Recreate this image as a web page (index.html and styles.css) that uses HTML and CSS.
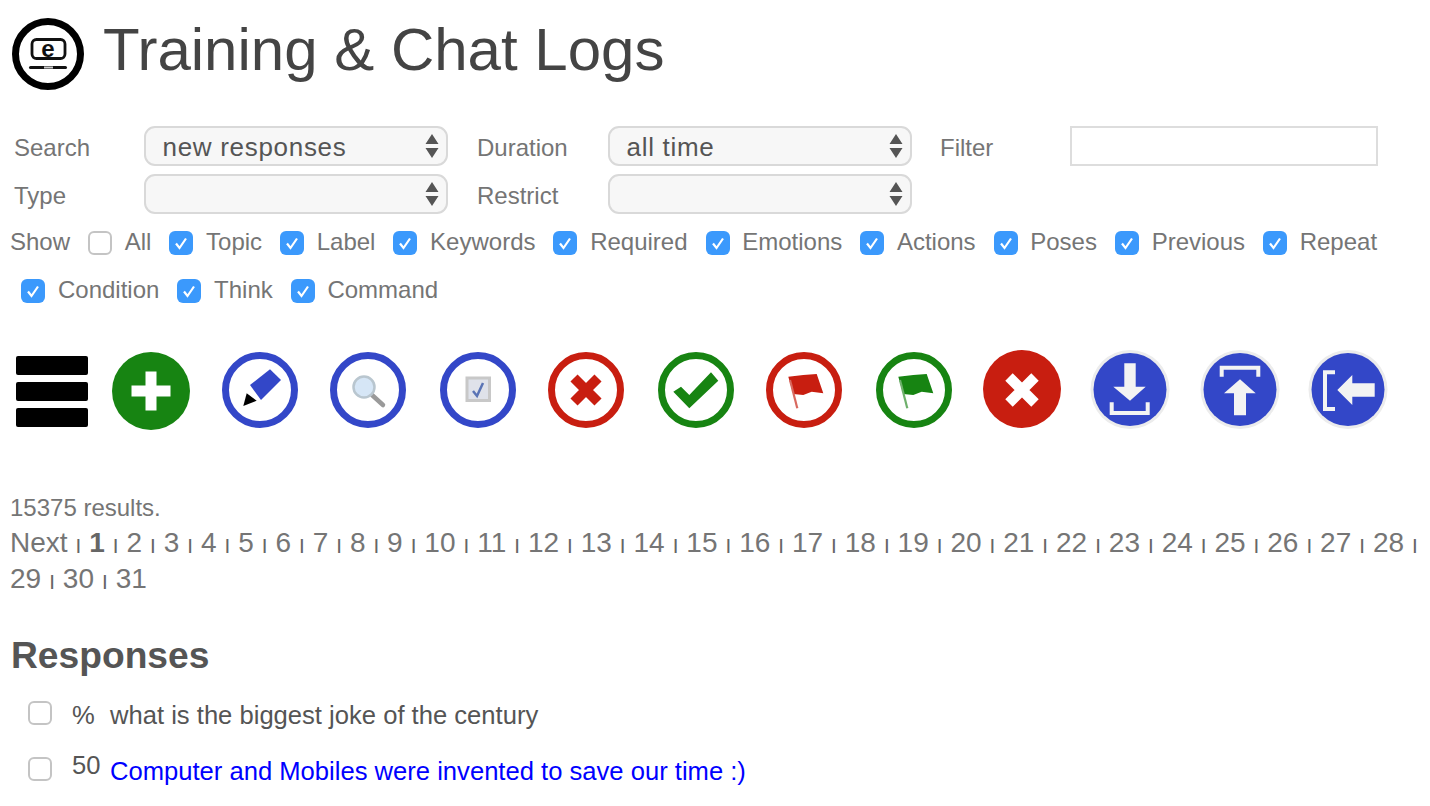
FILE: index.html
```html
<!DOCTYPE html>
<html lang="en">
<head>
<meta charset="utf-8">
<title>Training &amp; Chat Logs</title>
<link rel="stylesheet" href="styles.css">
</head>
<body>
<header class="page-head">
  <svg class="logo" viewBox="0 0 72 72" aria-hidden="true">
    <circle cx="36" cy="36" r="32.500" fill="#fff" stroke="#000" stroke-width="7"/>
    <rect x="20" y="21.500" width="33" height="19" rx="4.500" fill="none" stroke="#111" stroke-width="2.800"/>
    <text x="36" y="38.500" text-anchor="middle" class="logo-e">e</text>
    <rect x="17" y="48" width="38" height="3" rx="1.500" fill="#111"/>
    <rect x="32" y="48.500" width="9" height="2" fill="#ccc"/>
  </svg>
  <h1 class="title">Training &amp; Chat Logs</h1>
</header>

<form class="filters">
  <label class="f-label">Search</label>
  <select class="f-select"><option>new responses</option></select>
  <label class="f-label f-label-mid">Duration</label>
  <select class="f-select"><option>all time</option></select>
  <label class="f-label f-label-end">Filter</label>
  <input class="f-input" type="text">
  <label class="f-label">Type</label>
  <select class="f-select"><option></option></select>
  <label class="f-label f-label-mid">Restrict</label>
  <select class="f-select"><option></option></select>
</form>

<div class="show">
  <span>Show</span>
  <label class="opt"><input type="checkbox" class="box">All</label>
  <label class="opt"><input type="checkbox" class="box" checked>Topic</label>
  <label class="opt"><input type="checkbox" class="box" checked>Label</label>
  <label class="opt"><input type="checkbox" class="box" checked>Keywords</label>
  <label class="opt"><input type="checkbox" class="box" checked>Required</label>
  <label class="opt"><input type="checkbox" class="box" checked>Emotions</label>
  <label class="opt"><input type="checkbox" class="box" checked>Actions</label>
  <label class="opt"><input type="checkbox" class="box" checked>Poses</label>
  <label class="opt"><input type="checkbox" class="box" checked>Previous</label>
  <label class="opt"><input type="checkbox" class="box" checked>Repeat</label>
  <label class="opt"><input type="checkbox" class="box" checked>Condition</label>
  <label class="opt"><input type="checkbox" class="box" checked>Think</label>
  <label class="opt"><input type="checkbox" class="box" checked>Command</label>
</div>

<div class="toolbar">
  <svg class="menu" viewBox="0 0 72 80" aria-hidden="true">
    <rect y="6" width="72" height="19" rx="2"/>
    <rect y="32" width="72" height="19" rx="2"/>
    <rect y="58" width="72" height="19" rx="2"/>
  </svg>
  <svg class="icon first" viewBox="0 0 80 80" aria-hidden="true">
    <circle cx="41" cy="41" r="39" fill="#178412"/>
    <path d="M35.500 21.500h11v14h14v11h-14v14h-11v-14h-14v-11h14z" fill="#fff"/>
  </svg>
  <svg class="icon wide" viewBox="0 0 80 80" aria-hidden="true">
    <circle class="ring blue" cx="40" cy="40" r="34.500"/>
    <path d="M30 35 50 19.300 61 30 41 50z" fill="#3347c8"/>
    <path d="M23.300 56 26.700 43.300 36.700 50.700z" fill="#000"/>
  </svg>
  <svg class="icon" viewBox="0 0 80 80" aria-hidden="true">
    <circle class="ring blue" cx="40" cy="40" r="34.500"/>
    <path d="M44 45 55 55" stroke="#9a9a9a" stroke-width="4.500" stroke-linecap="round"/>
    <circle cx="36" cy="37" r="10.500" fill="#d6e6f6" stroke="#b9c6cf" stroke-width="2.500"/>
  </svg>
  <svg class="icon wide" viewBox="0 0 80 80" aria-hidden="true">
    <circle class="ring blue" cx="40" cy="40" r="34.500"/>
    <rect x="29" y="28" width="22.500" height="22.500" fill="#dfe2ea" stroke="#c8c8c8" stroke-width="3"/>
    <path d="M35 41 39 46 45 33" fill="none" stroke="#5a74b5" stroke-width="2.500"/>
  </svg>
  <svg class="icon" viewBox="0 0 80 80" aria-hidden="true">
    <circle class="ring red" cx="40" cy="40" r="34.500"/>
    <path d="M28 28 52 52M52 28 28 52" stroke="#c81e10" stroke-width="10"/>
  </svg>
  <svg class="icon wide" viewBox="0 0 80 80" aria-hidden="true">
    <circle class="ring green" cx="40" cy="40" r="34.500"/>
    <path d="M17.300 41.700 25 36.700 33.300 45 55 22.300 62.300 30.700 33.300 58.300z" fill="#178412"/>
  </svg>
  <svg class="icon" viewBox="0 0 80 80" aria-hidden="true">
    <circle class="ring red" cx="40" cy="40" r="34.500"/>
    <path d="M24.300 26.700 39.300 25 52.700 24 59.300 43.300 47.700 41.700 39.300 45 29.300 44z" fill="#c81e10"/>
    <path d="M26 30 33.300 58.300" stroke="#d8695f" stroke-width="2.200"/>
  </svg>
  <svg class="icon wide" viewBox="0 0 80 80" aria-hidden="true">
    <circle class="ring green" cx="40" cy="40" r="34.500"/>
    <path d="M24.300 26.700 39.300 25 52.700 24 59.300 43.300 47.700 41.700 39.300 45 29.300 44z" fill="#178412"/>
    <path d="M26 30 33.300 58.300" stroke="#6fb06c" stroke-width="2.200"/>
  </svg>
  <svg class="icon" viewBox="0 0 80 80" aria-hidden="true">
    <circle cx="40" cy="39" r="39" fill="#c81e10"/>
    <path d="M27 27 53 53M53 27 27 53" stroke="#fff" stroke-width="10.500"/>
  </svg>
  <svg class="icon" viewBox="0 0 80 80" aria-hidden="true">
    <circle cx="40" cy="39.500" r="39.500" fill="#ececec"/>
    <circle cx="40" cy="39.500" r="36.500" fill="#3347c8"/>
    <path d="M34.300 13.300h11.400v23.400h10L40 50.700 23.300 36.700h11z" fill="#f3f3f3"/>
    <path d="M21.700 52.300V63h36V52.300" fill="none" stroke="#f3f3f3" stroke-width="4"/>
  </svg>
  <svg class="icon wide" viewBox="0 0 80 80" aria-hidden="true">
    <circle cx="40" cy="39.500" r="39.500" fill="#ececec"/>
    <circle cx="40" cy="39.500" r="36.500" fill="#3347c8"/>
    <path d="M21.700 26.700V17.700H58.300V26.700" fill="none" stroke="#f3f3f3" stroke-width="4"/>
    <path d="M40 29.300 55.700 43.300H46V65.300H34V43.300H24z" fill="#f3f3f3"/>
  </svg>
  <svg class="icon" viewBox="0 0 80 80" aria-hidden="true">
    <circle cx="40" cy="39.500" r="39.500" fill="#ececec"/>
    <circle cx="40" cy="39.500" r="36.500" fill="#3347c8"/>
    <path d="M27 22.300H17V59H27" fill="none" stroke="#f3f3f3" stroke-width="4"/>
    <path d="M29.300 40 44.300 25V33.300H66.700V46.700H44.300V55z" fill="#f3f3f3"/>
  </svg>
</div>

<p class="results">15375 results.</p>
<nav class="pager">
  <a href="#">Next</a> <i>|</i> <a href="#" class="current">1</a> <i>|</i> <a href="#">2</a> <i>|</i> <a href="#">3</a> <i>|</i> <a href="#">4</a> <i>|</i> <a href="#">5</a> <i>|</i> <a href="#">6</a> <i>|</i> <a href="#">7</a> <i>|</i> <a href="#">8</a> <i>|</i> <a href="#">9</a> <i>|</i> <a href="#">10</a> <i>|</i> <a href="#">11</a> <i>|</i> <a href="#">12</a> <i>|</i> <a href="#">13</a> <i>|</i> <a href="#">14</a> <i>|</i> <a href="#">15</a> <i>|</i> <a href="#">16</a> <i>|</i> <a href="#">17</a> <i>|</i> <a href="#">18</a> <i>|</i> <a href="#">19</a> <i>|</i> <a href="#">20</a> <i>|</i> <a href="#">21</a> <i>|</i> <a href="#">22</a> <i>|</i> <a href="#">23</a> <i>|</i> <a href="#">24</a> <i>|</i> <a href="#">25</a> <i>|</i> <a href="#">26</a> <i>|</i> <a href="#">27</a> <i>|</i> <a href="#">28</a> <i>|</i> <a href="#">29</a> <i>|</i> <a href="#">30</a> <i>|</i> <a href="#">31</a>
</nav>

<h2 class="section">Responses</h2>
<div class="row">
  <input type="checkbox" class="box row-box">
  <span class="score">%</span>
  <span class="phrase">what is the biggest joke of the century</span>
</div>
<div class="row">
  <input type="checkbox" class="box row-box">
  <span class="score score-num">50</span>
  <a href="#" class="phrase phrase-link">Computer and Mobiles were invented to save our time :)</a>
</div>
</body>
</html>
```

FILE: styles.css
```css
* { box-sizing: border-box; }
html, body { margin: 0; padding: 0; }
body {
  font-family: "Liberation Sans", Arial, sans-serif;
  color: #757575;
  background: #fff;
  font-size: 24px;
  overflow: hidden;
}

.page-head {
  display: flex;
  align-items: center;
  gap: 19px;
  height: 108px;
  padding-left: 12px;
}
.logo { width: 72px; height: 72px; flex: none; }
.logo-e { font: bold 24px "Liberation Sans", Arial, sans-serif; fill: #111; }
.title {
  margin: 0 0 8px;
  font-size: 60px;
  font-weight: 400;
  color: #444;
  line-height: 1;
}

.filters {
  display: grid;
  grid-template-columns: 130px 304px 160px 304px 158px 308px;
  grid-auto-rows: 40px;
  row-gap: 8px;
  margin-top: 18px;
  padding-left: 14px;
}
.f-label { display: flex; align-items: center; padding-top: 4px; }
.f-label-mid { padding-left: 29px; }
.f-label-end { padding-left: 28px; }
.f-select {
  appearance: none;
  -webkit-appearance: none;
  width: 100%;
  height: 40px;
  margin: 0;
  padding: 2px 40px 0 16.500px;
  font: 26px "Liberation Sans", Arial, sans-serif;
  letter-spacing: 0.7px;
  color: #555;
  border: 2px solid #d9d9d9;
  border-radius: 11px;
  background: #f7f7f7 url("data:image/svg+xml,%3Csvg xmlns='http://www.w3.org/2000/svg' width='14' height='26'%3E%3Cpath d='M7 1 13.500 11H.5zM7 25 .5 15h13z' fill='%23555'/%3E%3C/svg%3E") no-repeat right 7px center;
}
.f-input {
  width: 308px;
  height: 40px;
  border: 2px solid #ddd;
  background: #fff;
  margin: 0;
}

.show {
  margin-top: 4px;
  padding-left: 10px;
  line-height: 48px;
}
.opt { display: inline-block; white-space: nowrap; margin-left: 11.300px; }
.box {
  appearance: none;
  -webkit-appearance: none;
  display: inline-block;
  width: 24px;
  height: 24px;
  margin: 0 12.700px 0 0;
  vertical-align: -5px;
  background: #fff;
  border: 2px solid #c4c4c4;
  border-radius: 6px;
}
.box:checked {
  border: 0;
  background: #3b99fc url("data:image/svg+xml,%3Csvg xmlns='http://www.w3.org/2000/svg' width='24' height='24'%3E%3Cpath d='M7 12.500 10.500 17 17 7.500' fill='none' stroke='%23fff' stroke-width='2.200'/%3E%3C/svg%3E") center no-repeat;
}

.toolbar {
  display: flex;
  margin-top: 36px;
  padding-left: 16px;
  height: 80px;
}
.menu { width: 72px; height: 80px; flex: none; fill: #000; }
.icon {
  width: 80px;
  height: 80px;
  flex: none;
  margin-left: 28px;
  filter: blur(0.4px);
}
.icon.first { margin-left: 22px; }
.icon.wide { margin-left: 30px; }
.ring { fill: none; stroke-width: 7; }
.ring.blue { stroke: #3347c8; }
.ring.red { stroke: #c81e10; }
.ring.green { stroke: #178412; }

.results {
  margin: 63px 0 0;
  padding-left: 10px;
  line-height: 30px;
}
.pager {
  margin-top: 2px;
  padding-left: 10px;
  font-size: 28px;
  line-height: 36px;
}
.pager a { color: #757575; text-decoration: none; }
.pager a.current { font-weight: 700; color: #666; }
.pager i {
  display: inline-block;
  width: 6.100px;
  font-size: 15px;
  font-weight: 700;
  font-style: normal;
  text-align: center;
  line-height: 1;
  vertical-align: 2px;
  color: #666;
}

.section {
  margin: 36px 0 0;
  padding-left: 11px;
  font-size: 37.200px;
  line-height: 44px;
  font-weight: 700;
  color: #555;
}
.row {
  display: flex;
  align-items: center;
  height: 56px;
  padding-left: 28px;
  font-size: 25.600px;
  color: #555;
}
.section + .row { margin-top: 10px; }
.row-box { margin: 0 0 4px; flex: none; }
.score { width: 38px; margin-left: 20px; flex: none; }
.score-num { margin-bottom: 12px; }
.phrase-link { color: #00f; text-decoration: none; }
```
